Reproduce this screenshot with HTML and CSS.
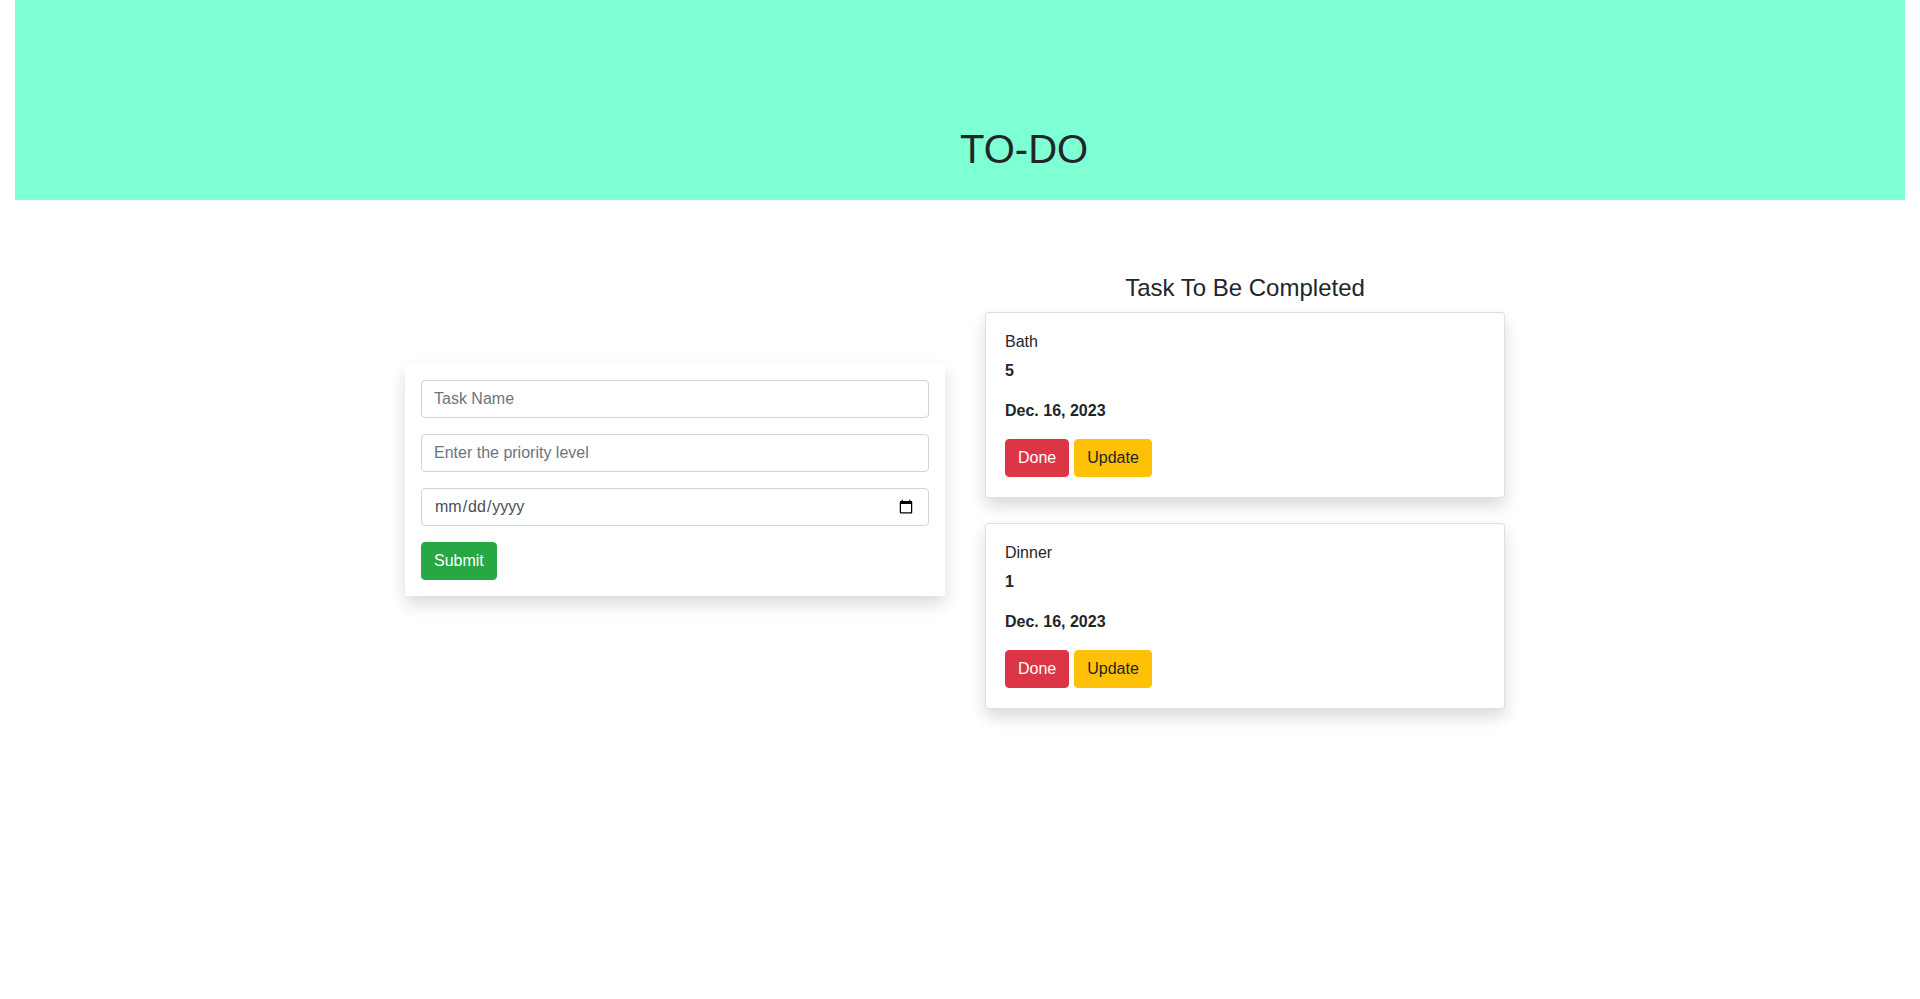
FILE: index.html
```html
<!DOCTYPE html>
<html lang="en">
<head>
<meta charset="utf-8">
<title>TO-DO</title>
<link rel="stylesheet" href="styles.css">
</head>
<body>
<header class="banner">
  <h1 class="banner-title">TO-DO</h1>
</header>
<main class="layout">
  <section class="form-col">
    <form class="task-form">
      <div class="form-group"><input class="form-control" type="text" placeholder="Task Name"></div>
      <div class="form-group"><input class="form-control" type="text" placeholder="Enter the priority level"></div>
      <div class="form-group"><input class="form-control date-control" type="date"></div>
      <button type="button" class="btn btn-success">Submit</button>
    </form>
  </section>
  <section class="task-col">
    <h4 class="task-heading">Task To Be Completed</h4>
    <div class="task-card">
      <div class="task-name">Bath</div>
      <div class="task-priority">5</div>
      <div class="task-date">Dec. 16, 2023</div>
      <div class="task-actions">
        <button type="button" class="btn btn-danger">Done</button>
        <button type="button" class="btn btn-warning">Update</button>
      </div>
    </div>
    <div class="task-card">
      <div class="task-name">Dinner</div>
      <div class="task-priority">1</div>
      <div class="task-date">Dec. 16, 2023</div>
      <div class="task-actions">
        <button type="button" class="btn btn-danger">Done</button>
        <button type="button" class="btn btn-warning">Update</button>
      </div>
    </div>
  </section>
</main>
</body>
</html>
```
FILE: styles.css
```css
* { box-sizing: border-box; }
html, body {
  margin: 0;
  padding: 0;
  background: #fff;
}
body {
  font-family: "Liberation Sans", Arial, sans-serif;
  font-size: 16px;
  line-height: 1.5;
  color: #212529;
}
.banner {
  margin: 0 15px;
  height: 200px;
  background: #7fffd4;
  padding-top: 125px;
}
.banner-title {
  margin: 0 0 0 50%;
  font-size: 40px;
  font-weight: 500;
  line-height: 48px;
}
.layout {
  width: 1110px;
  margin: 0 auto;
  display: grid;
  grid-template-columns: 540px 520px;
  column-gap: 40px;
  align-items: start;
}
.form-col { margin-top: 164px; }
.task-form {
  background: #fff;
  padding: 16px;
  box-shadow: 0 8px 16px rgba(0, 0, 0, 0.15);
}
.form-group { margin-bottom: 16px; }
.form-control {
  display: block;
  width: 100%;
  height: 38px;
  padding: 6px 12px;
  font-family: inherit;
  font-size: 16px;
  line-height: 1.5;
  color: #495057;
  background: #fff;
  border: 1px solid #ced4da;
  border-radius: 4px;
}
.form-control::placeholder { color: #6c757d; opacity: 1; }
.btn {
  display: inline-block;
  font-family: inherit;
  font-size: 16px;
  line-height: 1.5;
  padding: 6px 12px;
  border: 1px solid transparent;
  border-radius: 4px;
  cursor: pointer;
}
.btn-success { background: #28a745; border-color: #28a745; color: #fff; }
.btn-danger { background: #dc3545; border-color: #dc3545; color: #fff; }
.btn-warning { background: #ffc107; border-color: #ffc107; color: #212529; }
.task-col { margin-top: 74px; }
.task-heading {
  margin: 0 0 9px;
  font-size: 24px;
  font-weight: 500;
  line-height: 1.2;
  text-align: center;
}
.task-card {
  background: #fff;
  border: 1px solid rgba(0, 0, 0, 0.125);
  border-radius: 4px;
  padding: 17px 19px 20px;
  box-shadow: 0 8px 16px rgba(0, 0, 0, 0.15);
  margin-bottom: 25px;
}
.task-name { margin-bottom: 5px; }
.task-priority { font-weight: 700; margin-bottom: 16px; }
.task-date { font-weight: 700; margin-bottom: 16px; }
.task-actions { display: flex; gap: 5px; }
```
